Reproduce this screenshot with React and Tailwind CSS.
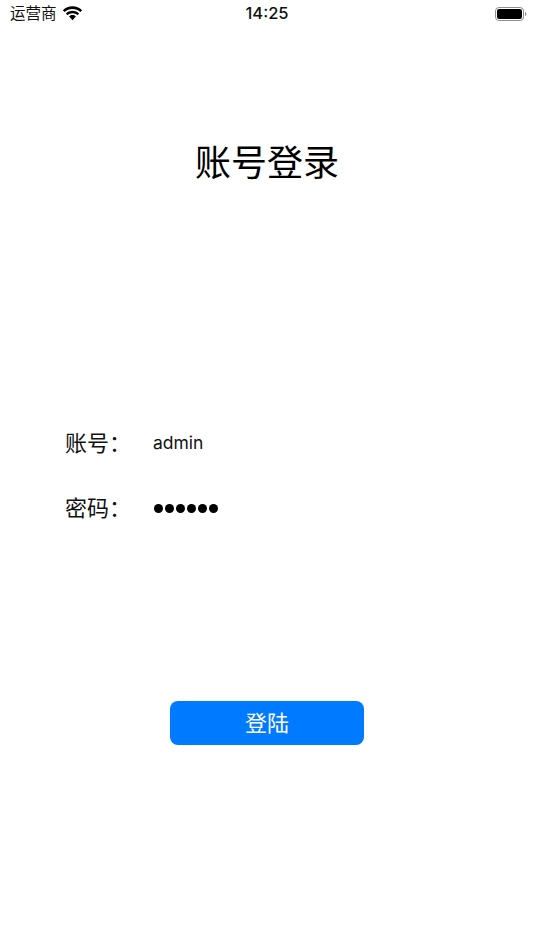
import React from 'react';

const FONT = "font-['Inter','Noto_Sans_CJK_SC',sans-serif]";

const WifiIcon = () => (
  <svg width="21" height="15" viewBox="0 0 20 14" fill="#000">
    <path d="M10 2.600c2.900 0 5.500 1.100 7.500 3l1.700-1.700C16.800 1.500 13.500.1 10 .1S3.200 1.500.8 3.900l1.700 1.700c2-1.900 4.600-3 7.500-3z" />
    <path d="M10 6.800c1.800 0 3.400.7 4.600 1.800l1.700-1.700C14.600 5.300 12.400 4.300 10 4.300S5.400 5.300 3.700 6.900l1.700 1.700C6.600 7.500 8.200 6.800 10 6.800z" />
    <path d="M10 8.500c-1.300 0-2.400.5-3.200 1.300L10 13.400l3.200-3.600C12.400 9 11.300 8.500 10 8.500z" />
  </svg>
);

const BatteryIcon = () => (
  <svg width="32" height="14" viewBox="0 0 32 14">
    <rect x="0.500" y="0.500" width="28" height="13" rx="3.500" fill="none" stroke="#8e8e8e" />
    <rect x="2" y="2" width="25" height="10" rx="2.200" fill="#000" />
    <path d="M30 5v4c.8-.3 1.300-1.100 1.300-2S30.800 5.300 30 5z" fill="#8e8e8e" />
  </svg>
);

const StatusBar = () => (
  <div className="relative flex h-[27px] items-center justify-between pl-[10px] pr-[7px]">
    <div className="flex items-center gap-[5px]">
      <span className="text-[15.500px] leading-none text-[#111]">运营商</span>
      <WifiIcon />
    </div>
    <span className="absolute left-0 right-0 text-center text-[16.500px] font-medium leading-none text-[#111]">14:25</span>
    <BatteryIcon />
  </div>
);

const Field = ({ label, children }) => (
  <div className="flex h-8 items-center">
    <span className="w-[88px] text-[22px] leading-none text-[#111]">{label}</span>
    {children}
  </div>
);

export default function App() {
  return (
    <div className={`${FONT} flex h-[950px] w-[534px] flex-col overflow-hidden bg-white`}>
      <StatusBar />
      <h1 className="mt-[106px] text-center text-[36px] font-normal leading-[60px] text-black">账号登录</h1>
      <div className="mt-[234px] flex flex-col gap-[33px] pl-[65px]">
        <Field label="账号：">
          <span className="text-[17.500px] leading-none text-[#111]">admin</span>
        </Field>
        <Field label="密码：">
          <div className="flex gap-[2px] pl-[1px]">
            {[0, 1, 2, 3, 4, 5].map((i) => (
              <span key={i} className="h-[9px] w-[9px] rounded-full bg-black" />
            ))}
          </div>
        </Field>
      </div>
      <button className="mx-auto mt-[177px] h-[44px] w-[194px] rounded-[8px] bg-[#007aff] text-[22px] text-white">登陆</button>
    </div>
  );
}
